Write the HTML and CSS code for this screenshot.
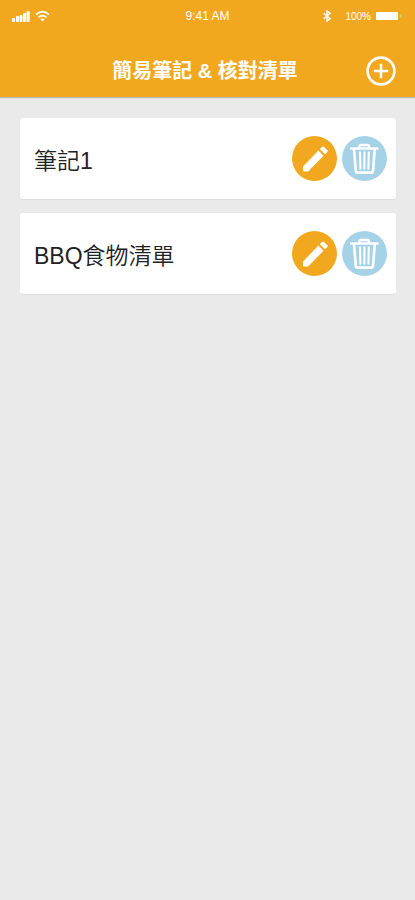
FILE: index.html
```html
<!DOCTYPE html>
<html lang="zh-Hant">
<head>
  <meta charset="UTF-8">
  <meta name="viewport" content="width=device-width, initial-scale=1.0">
  <title>簡易筆記 &amp; 核對清單</title>
  <link rel="stylesheet" href="styles.css">
</head>
<body>
  <header class="header">
    <div class="status-bar">
      <div class="status-left">
        <svg width="18" height="12" viewBox="0 0 18 12" fill="#fff">
          <rect x="0" y="8" width="3" height="4" rx="1"/>
          <rect x="4" y="6" width="3" height="6" rx="1"/>
          <rect x="7.5" y="5" width="3" height="7" rx="1"/>
          <rect x="11" y="3" width="3" height="9" rx="1"/>
          <rect x="14.5" y="1" width="3.2" height="11" rx="1"/>
        </svg>
        <svg width="15" height="12" viewBox="0 0 15 12" fill="none" stroke="#fff" stroke-width="1.6">
          <path d="M1 4.6Q7.5-1.2 14 4.6"/>
          <path d="M3.5 7.3Q7.5 3.8 11.5 7.3"/>
          <path d="M5.4 9.2Q7.5 7.6 9.6 9.2L7.5 11.4Z" fill="#fff" stroke="none"/>
        </svg>
      </div>
      <span class="time">9:41 AM</span>
      <div class="status-right">
        <svg width="8" height="12" viewBox="0 0 8 12" fill="none" stroke="#fff" stroke-width="1.4">
          <path d="M0.8 3.2L7 8.6L4 11.2V0.8L7 3.4L0.8 8.8"/>
        </svg>
        <span class="percent">100%</span>
        <svg width="28" height="10" viewBox="0 0 28 10">
          <rect x="1" y="1" width="22" height="8" rx="1" fill="#fff"/>
          <path d="M25.5 3Q27.5 5 25.5 7Z" fill="#fff" opacity="0.6"/>
        </svg>
      </div>
    </div>
    <div class="title-bar">
      <h1>簡易筆記 &amp; 核對清單</h1>
      <button type="button" class="add-button" aria-label="新增">
        <svg width="30" height="30" viewBox="0 0 30 30" fill="none" stroke="#fff" stroke-width="2.6">
          <circle cx="15" cy="15" r="13.4"/>
          <path d="M15 7.8V22.2M7.8 15H22.2"/>
        </svg>
      </button>
    </div>
  </header>

  <main>
    <ul class="note-list">
      <li class="note">
        <span class="note-name">筆記1</span>
        <button type="button" class="icon-button edit" aria-label="編輯 筆記1">
          <svg viewBox="0 0 45 45" fill="#fff">
            <path d="M11 30.5L26.4 14.6L31.5 19.7L16.2 35.5H12Q11 35.5 11 34.5Z"/>
            <path d="M27.8 13.1L30 10.9Q31 10 32 10.9L35.3 14.2Q36.2 15.2 35.3 16.1L33 18.3Z"/>
          </svg>
        </button>
        <button type="button" class="icon-button delete" aria-label="刪除 筆記1">
          <svg viewBox="0 0 45 45" fill="none" stroke="#fff" stroke-width="2.4">
            <path d="M8 12.5H36.5"/>
            <path d="M17.5 12V10.5Q17.5 9 19 9H25.5Q27 9 27 10.5V12"/>
            <path d="M12 13L13.8 35Q14 36.6 15.5 36.6H29.3Q30.8 36.6 31 35L32.8 13" stroke-width="2.6"/>
            <path d="M18 15.5L18.4 33.5M22.4 15.5V33.5M26.8 15.5L26.4 33.5" stroke-width="2"/>
          </svg>
        </button>
      </li>
      <li class="note">
        <span class="note-name">BBQ食物清單</span>
        <button type="button" class="icon-button edit" aria-label="編輯 BBQ食物清單">
          <svg viewBox="0 0 45 45" fill="#fff">
            <path d="M11 30.5L26.4 14.6L31.5 19.7L16.2 35.5H12Q11 35.5 11 34.5Z"/>
            <path d="M27.8 13.1L30 10.9Q31 10 32 10.9L35.3 14.2Q36.2 15.2 35.3 16.1L33 18.3Z"/>
          </svg>
        </button>
        <button type="button" class="icon-button delete" aria-label="刪除 BBQ食物清單">
          <svg viewBox="0 0 45 45" fill="none" stroke="#fff" stroke-width="2.4">
            <path d="M8 12.5H36.5"/>
            <path d="M17.5 12V10.5Q17.5 9 19 9H25.5Q27 9 27 10.5V12"/>
            <path d="M12 13L13.8 35Q14 36.6 15.5 36.6H29.3Q30.8 36.6 31 35L32.8 13" stroke-width="2.6"/>
            <path d="M18 15.5L18.4 33.5M22.4 15.5V33.5M26.8 15.5L26.4 33.5" stroke-width="2"/>
          </svg>
        </button>
      </li>
    </ul>
  </main>
</body>
</html>
```

FILE: styles.css
```css
* {
  box-sizing: border-box;
}

body {
  margin: 0;
  min-height: 100vh;
  background-color: #eaeaea;
  font-family: "Liberation Sans", "Noto Sans CJK TC", sans-serif;
}

button {
  padding: 0;
  border: none;
  background: none;
  cursor: pointer;
}

svg {
  display: block;
}

.header {
  background-color: #f1a81f;
  color: #fff;
  box-shadow: 0 1px 1px rgba(0, 0, 0, 0.2);
}

.status-bar {
  display: grid;
  grid-template-columns: 1fr auto 1fr;
  align-items: center;
  height: 32px;
  padding: 0 12px;
}

.status-left {
  display: flex;
  gap: 5px;
}

.status-right {
  display: flex;
  align-items: center;
  justify-content: flex-end;
}

.time {
  font-size: 12px;
}

.percent {
  margin-left: 14px;
  margin-right: 4px;
  font-size: 10px;
}

/* empty first column keeps the title centred */
.title-bar {
  display: grid;
  grid-template-columns: 1fr auto 1fr;
  align-items: center;
  height: 65px;
  padding: 12px 19px 0 14px;
}

.title-bar h1 {
  grid-column: 2;
  margin: 0;
  font-size: 20px;
  line-height: 30px;
}

.add-button {
  justify-self: end;
}

.note-list {
  display: flex;
  flex-direction: column;
  gap: 14px;
  margin: 0;
  padding: 21px 19px 21px 20px;
  list-style: none;
}

.note {
  display: flex;
  align-items: center;
  gap: 5px;
  height: 81px;
  padding: 0 9px 0 14px;
  border-radius: 3px;
  background-color: #fff;
  box-shadow: 0 1px 1px rgba(0, 0, 0, 0.06);
}

.note-name {
  flex: 1;
  font-size: 23px;
  font-weight: 350;
  color: #222;
}

.icon-button {
  width: 45px;
  height: 45px;
  border-radius: 50%;
}

.edit {
  background-color: #f1a81f;
}

.delete {
  background-color: #a6d2e7;
}
```
